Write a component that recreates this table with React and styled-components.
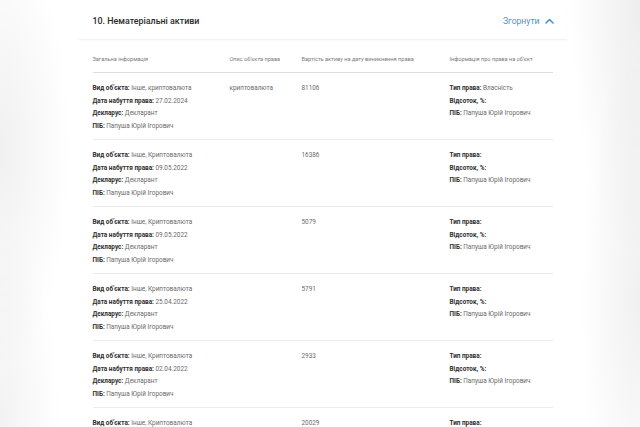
import React from "react";
import styled, { createGlobalStyle } from "styled-components";

const Global = createGlobalStyle`
  html, body { margin: 0; padding: 0; }
  body {
    width: 640px;
    height: 427px;
    overflow: hidden;
    font-family: Roboto, "Noto Sans", "Liberation Sans", sans-serif;
    background:
      radial-gradient(ellipse 70px 220px at 0px 150px, rgba(0,0,0,0.06), rgba(0,0,0,0) 100%),
      radial-gradient(ellipse 60px 200px at 0px 420px, rgba(0,0,0,0.05), rgba(0,0,0,0) 100%),
      radial-gradient(ellipse 70px 260px at 640px 0px, rgba(0,0,0,0.07), rgba(0,0,0,0) 100%),
      radial-gradient(ellipse 60px 260px at 640px 300px, rgba(0,0,0,0.06), rgba(0,0,0,0) 100%),
      #ffffff;
  }
`;

const Page = styled.div`
  display: flex;
  justify-content: center;
  padding-left: 5px;
`;

const Card = styled.section`
  width: 488px;
  background: #fff;
`;

const Header = styled.div`
  display: flex;
  align-items: center;
  justify-content: space-between;
  height: 40px;
  padding: 3px 13px 0 14px;
  box-sizing: border-box;
  border-bottom: 1px solid #f1f2f4;
  box-shadow: 0 1px 2px rgba(0,0,0,0.02);
`;

const Title = styled.h2`
  margin: 0;
  font-size: 8.9px;
  font-weight: 500;
  color: #2b2b2b;
`;

const Toggle = styled.button`
  display: flex;
  align-items: center;
  gap: 5px;
  border: 0;
  background: none;
  padding: 0;
  font-family: inherit;
  font-size: 8.6px;
  color: #4a93cf;
  cursor: pointer;
`;

const Table = styled.div`
  margin: 0 14px;
`;

const Row = styled.div`
  display: grid;
  grid-template-columns: 137px 72px 148px 1fr;
  border-bottom: 1px solid ${(p) => (p.$head ? "#dcdcdc" : "#ececec")};
  padding: ${(p) => (p.$head ? "15px 0 8px" : "9px 0 7px")};
  font-size: ${(p) => (p.$head ? "5.6px" : "6.4px")};
  line-height: ${(p) => (p.$head ? "9px" : "12.5px")};
  color: ${(p) => (p.$head ? "#7a7a7a" : "#6a6a6a")};
`;

const Cell = styled.div`
  display: flex;
  flex-direction: column;
  white-space: nowrap;
`;

const Line = styled.div``;

const Label = styled.span`
  font-weight: 700;
  color: #2f2f2f;
`;

const Chevron = () => (
  <svg width="9" height="6" viewBox="0 0 9 6" fill="none">
    <path d="M1 5L4.5 1.5L8 5" stroke="#4a93cf" strokeWidth="1.6" strokeLinecap="round" strokeLinejoin="round" />
  </svg>
);

const rows = [
  { kind: "Інше, криптовалюта", date: "27.02.2024", desc: "криптовалюта", value: "81106", type: "Власність" },
  { kind: "Інше, Криптовалюта", date: "09.05.2022", desc: "", value: "16386", type: "" },
  { kind: "Інше, Криптовалюта", date: "09.05.2022", desc: "", value: "5079", type: "" },
  { kind: "Інше, Криптовалюта", date: "25.04.2022", desc: "", value: "5791", type: "" },
  { kind: "Інше, Криптовалюта", date: "02.04.2022", desc: "", value: "2933", type: "" },
  { kind: "Інше, Криптовалюта", date: "02.04.2022", desc: "", value: "20029", type: "" },
];

const name = "Папуша Юрій Ігорович";

export default function App() {
  return (
    <>
      <Global />
      <Page>
        <Card>
          <Header>
            <Title>10. Нематеріальні активи</Title>
            <Toggle>
              Згорнути <Chevron />
            </Toggle>
          </Header>
          <Table>
            <Row $head>
              <Cell>Загальна інформація</Cell>
              <Cell>Опис об’єкта права</Cell>
              <Cell>Вартість активу на дату виникнення права</Cell>
              <Cell>Інформація про права на об’єкт</Cell>
            </Row>
            {rows.map((r, i) => (
              <Row key={i}>
                <Cell>
                  <Line><Label>Вид об’єкта:</Label> {r.kind}</Line>
                  <Line><Label>Дата набуття права:</Label> {r.date}</Line>
                  <Line><Label>Декларус:</Label> Декларант</Line>
                  <Line><Label>ПІБ:</Label> {name}</Line>
                </Cell>
                <Cell>
                  <Line>{r.desc}</Line>
                </Cell>
                <Cell>
                  <Line>{r.value}</Line>
                </Cell>
                <Cell>
                  <Line><Label>Тип права:</Label> {r.type}</Line>
                  <Line><Label>Відсоток, %:</Label></Line>
                  <Line><Label>ПІБ:</Label> {name}</Line>
                </Cell>
              </Row>
            ))}
          </Table>
        </Card>
      </Page>
    </>
  );
}
